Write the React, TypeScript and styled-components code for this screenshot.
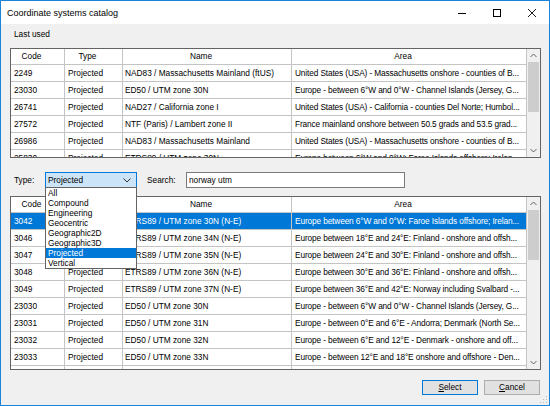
import React from "react";
import styled, { createGlobalStyle } from "styled-components";

const GlobalStyle = createGlobalStyle`
  html, body { margin: 0; padding: 0; background: #ffffff; overflow: hidden; }
  * { box-sizing: border-box; }
`;

const COLS = "54px 58px 169px 235px";
const GRID_LINE = "#c4c4c4";

const Window = styled.div`
  position: relative;
  width: 550px;
  height: 406px;
  border: 1px solid #1883d7;
  display: flex;
  flex-direction: column;
  background: #f0f0f0;
  font-family: "Liberation Sans", Arial, sans-serif;
  font-size: 8.3px;
  color: #000;
`;

const TitleBar = styled.div`
  height: 23px;
  flex: none;
  background: #ffffff;
  display: flex;
  align-items: center;
`;

const Title = styled.div`
  flex: 1;
  padding-left: 6px;
  font-size: 9px;
  line-height: 12px;
`;

const TitleButton = styled.div`
  width: 35px;
  height: 23px;
  display: flex;
  align-items: center;
  justify-content: center;
`;

const Body = styled.div`
  flex: 1;
  display: flex;
  flex-direction: column;
  padding: 0 8px 0 9px;
`;

const SectionLabel = styled.div`
  height: 24px;
  flex: none;
  padding: 5px 0 0 4px;
  line-height: 10px;
`;

const GridFrame = styled.div<{ $h: number }>`
  height: ${(p) => p.$h}px;
  flex: none;
  border: 1px solid #646464;
  background: #ffffff;
  display: flex;
  overflow: hidden;
`;

const GridMain = styled.div`
  flex: 1;
  display: flex;
  flex-direction: column;
  overflow: hidden;
`;

const HeaderRow = styled.div`
  display: grid;
  grid-template-columns: ${COLS};
  height: 16px;
  flex: none;
`;

const HeaderCell = styled.div`
  border-right: 1px solid ${GRID_LINE};
  border-bottom: 1px solid ${GRID_LINE};
  text-align: center;
  padding-right: 12px;
  line-height: 15px;
  white-space: nowrap;
  overflow: hidden;
`;

const DataRow = styled.div<{ $selected?: boolean }>`
  display: grid;
  grid-template-columns: ${COLS};
  height: 17px;
  flex: none;
  background: ${(p) => (p.$selected ? "#0078d7" : "#ffffff")};
  color: ${(p) => (p.$selected ? "#ffffff" : "#000000")};
`;

const Cell = styled.div`
  border-right: 1px solid ${GRID_LINE};
  border-bottom: 1px solid ${GRID_LINE};
  padding: 0 2px 0 3px;
  line-height: 16px;
  white-space: nowrap;
  overflow: hidden;
  text-overflow: ellipsis;
`;

const NameCell = styled(Cell)`
  padding-left: 2px;
`;

const AreaCell = styled(Cell)`
  letter-spacing: -0.13px;
  text-overflow: clip;
`;

const Scrollbar = styled.div`
  width: 13px;
  flex: none;
  background: #f0f0f0;
  display: flex;
  flex-direction: column;
`;

const ScrollArrow = styled.div`
  height: 13px;
  flex: none;
  display: flex;
  align-items: center;
  justify-content: center;
`;

const ScrollTrack = styled.div`
  flex: 1;
  display: flex;
  flex-direction: column;
`;

const Thumb = styled.div<{ $h: number }>`
  height: ${(p) => p.$h}px;
  margin: 0 1px;
  background: #cdcdcd;
`;

const FilterRow = styled.div`
  height: 38px;
  flex: none;
  display: flex;
  align-items: flex-start;
  padding: 14px 0 0 4px;
`;

const FieldLabel = styled.div<{ $w: number; $ml?: number }>`
  width: ${(p) => p.$w}px;
  margin-left: ${(p) => p.$ml ?? 0}px;
  line-height: 16px;
  flex: none;
`;

const ComboWrap = styled.div`
  position: relative;
  width: 92px;
  height: 16px;
  flex: none;
`;

const ComboBox = styled.div`
  height: 16px;
  border: 1px solid #0078d7;
  background: #cce4f7;
  display: flex;
  align-items: center;
  justify-content: space-between;
  padding: 0 5px 0 2px;
  line-height: 14px;
`;

const DropList = styled.div`
  position: absolute;
  top: 15px;
  left: 0;
  width: 92px;
  border: 1px solid #646464;
  background: #ffffff;
  z-index: 5;
`;

const DropItem = styled.div<{ $selected?: boolean }>`
  height: 10px;
  line-height: 10px;
  padding-left: 2px;
  background: ${(p) => (p.$selected ? "#0078d7" : "transparent")};
  color: ${(p) => (p.$selected ? "#ffffff" : "#000000")};
`;

const SearchInput = styled.input`
  width: 219px;
  height: 16px;
  flex: none;
  border: 1px solid #7a7a7a;
  background: #ffffff;
  padding: 0 2px;
  margin: 0;
  font-family: "Liberation Sans", Arial, sans-serif;
  font-size: 8.3px;
  color: #000;
  outline: none;
`;

const ButtonRow = styled.div`
  flex: 1;
  display: flex;
  justify-content: flex-end;
  align-items: flex-start;
  gap: 6px;
  padding: 10px 1px 0 0;
`;

const DialogButton = styled.button<{ $default?: boolean }>`
  width: 56px;
  height: 15px;
  padding: 0;
  margin: 0;
  border: 1px solid ${(p) => (p.$default ? "#0078d7" : "#adadad")};
  background: #e1e1e1;
  font-family: "Liberation Sans", Arial, sans-serif;
  font-size: 8.3px;
  line-height: 13px;
  color: #000;
  text-align: center;
`;

const Mnemonic = styled.span`
  text-decoration: underline;
`;

const Grip = styled.div`
  position: absolute;
  right: 1px;
  bottom: 1px;
  width: 9px;
  height: 9px;
  display: flex;
`;

type Row = [string, string, string, string];

const topRows: Row[] = [
  ["2249", "Projected", "NAD83 / Massachusetts Mainland (ftUS)", "United States (USA) - Massachusetts onshore - counties of B..."],
  ["23030", "Projected", "ED50 / UTM zone 30N", "Europe - between 6°W and 0°W - Channel Islands (Jersey, G..."],
  ["26741", "Projected", "NAD27 / California zone I", "United States (USA) - California - counties Del Norte; Humbol..."],
  ["27572", "Projected", "NTF (Paris) / Lambert zone II", "France mainland onshore between 50.5 grads and 53.5 grad..."],
  ["26986", "Projected", "NAD83 / Massachusetts Mainland", "United States (USA) - Massachusetts onshore - counties of B..."],
  ["25830", "Projected", "ETRS89 / UTM zone 30N", "Europe between 6°W and 0°W: Faroe Islands offshore; Irelan..."],
];

const bottomRows: Row[] = [
  ["3042", "Projected", "ETRS89 / UTM zone 30N (N-E)", "Europe between 6°W and 0°W: Faroe Islands offshore; Irelan..."],
  ["3046", "Projected", "ETRS89 / UTM zone 34N (N-E)", "Europe between 18°E and 24°E: Finland - onshore and offsh..."],
  ["3047", "Projected", "ETRS89 / UTM zone 35N (N-E)", "Europe between 24°E and 30°E: Finland - onshore and offsh..."],
  ["3048", "Projected", "ETRS89 / UTM zone 36N (N-E)", "Europe between 30°E and 36°E: Finland - onshore and offsh..."],
  ["3049", "Projected", "ETRS89 / UTM zone 37N (N-E)", "Europe between 36°E and 42°E: Norway including Svalbard -..."],
  ["23030", "Projected", "ED50 / UTM zone 30N", "Europe - between 6°W and 0°W - Channel Islands (Jersey, G..."],
  ["23031", "Projected", "ED50 / UTM zone 31N", "Europe - between 0°E and 6°E - Andorra; Denmark (North Se..."],
  ["23032", "Projected", "ED50 / UTM zone 32N", "Europe - between 6°E and 12°E - Denmark - onshore and off..."],
  ["23033", "Projected", "ED50 / UTM zone 33N", "Europe - between 12°E and 18°E onshore and offshore - Den..."],
  ["23034", "Projected", "ED50 / UTM zone 34N", "Europe - between 18°E and 24°E - Albania; Denmark - offsh..."],
];

const typeOptions = [
  "All",
  "Compound",
  "Engineering",
  "Geocentric",
  "Geographic2D",
  "Geographic3D",
  "Projected",
  "Vertical",
];

const Chevron = ({ up }: { up?: boolean }) => (
  <svg width="7" height="5" viewBox="0 0 7 5">
    <polyline
      points={up ? "0.5,4 3.5,1 6.5,4" : "0.5,1 3.5,4 6.5,1"}
      fill="none"
      stroke="#606060"
      strokeWidth="1"
    />
  </svg>
);

const DataGrid = ({
  rows,
  height,
  selected,
}: {
  rows: Row[];
  height: number;
  selected?: number;
}) => (
  <GridFrame $h={height}>
    <GridMain>
      <HeaderRow>
        <HeaderCell>Code</HeaderCell>
        <HeaderCell>Type</HeaderCell>
        <HeaderCell>Name</HeaderCell>
        <HeaderCell>Area</HeaderCell>
      </HeaderRow>
      {rows.map((r, i) => (
        <DataRow key={i} $selected={selected === i}>
          <Cell>{r[0]}</Cell>
          <Cell>{r[1]}</Cell>
          <NameCell>{r[2]}</NameCell>
          <AreaCell>{r[3]}</AreaCell>
        </DataRow>
      ))}
    </GridMain>
    <Scrollbar>
      <ScrollArrow>
        <Chevron up />
      </ScrollArrow>
      <ScrollTrack>
        <Thumb $h={50} />
      </ScrollTrack>
      <ScrollArrow>
        <Chevron />
      </ScrollArrow>
    </Scrollbar>
  </GridFrame>
);

export default function App() {
  return (
    <>
      <GlobalStyle />
      <Window>
        <TitleBar>
          <Title>Coordinate systems catalog</Title>
          <TitleButton>
            <svg width="10" height="10" viewBox="0 0 10 10">
              <line x1="1" y1="5.5" x2="9" y2="5.5" stroke="#000" strokeWidth="1" />
            </svg>
          </TitleButton>
          <TitleButton>
            <svg width="10" height="10" viewBox="0 0 10 10">
              <rect x="1.5" y="1.5" width="7" height="7" fill="none" stroke="#000" strokeWidth="1" />
            </svg>
          </TitleButton>
          <TitleButton>
            <svg width="10" height="10" viewBox="0 0 10 10">
              <line x1="1" y1="1" x2="9" y2="9" stroke="#000" strokeWidth="0.9" />
              <line x1="9" y1="1" x2="1" y2="9" stroke="#000" strokeWidth="0.9" />
            </svg>
          </TitleButton>
        </TitleBar>
        <Body>
          <SectionLabel>Last used</SectionLabel>
          <DataGrid rows={topRows} height={110} />
          <FilterRow>
            <FieldLabel $w={31}>Type:</FieldLabel>
            <ComboWrap>
              <ComboBox>
                <span>Projected</span>
                <svg width="8" height="5" viewBox="0 0 8 5">
                  <polyline points="0.5,0.5 4,4 7.5,0.5" fill="none" stroke="#333" strokeWidth="1" />
                </svg>
              </ComboBox>
              <DropList>
                {typeOptions.map((t) => (
                  <DropItem key={t} $selected={t === "Projected"}>
                    {t}
                  </DropItem>
                ))}
              </DropList>
            </ComboWrap>
            <FieldLabel $w={39} $ml={10}>
              Search:
            </FieldLabel>
            <SearchInput readOnly value="norway utm" />
          </FilterRow>
          <DataGrid rows={bottomRows} height={174} selected={0} />
          <ButtonRow>
            <DialogButton $default>
              <Mnemonic>S</Mnemonic>elect
            </DialogButton>
            <DialogButton>
              <Mnemonic>C</Mnemonic>ancel
            </DialogButton>
          </ButtonRow>
        </Body>
        <Grip>
          <svg width="9" height="9" viewBox="0 0 9 9">
            {[
              [7, 1],
              [7, 4],
              [4, 4],
              [7, 7],
              [4, 7],
              [1, 7],
            ].map(([x, y], i) => (
              <rect key={i} x={x} y={y} width="1" height="1" fill="#b8b8b8" />
            ))}
          </svg>
        </Grip>
      </Window>
    </>
  );
}
